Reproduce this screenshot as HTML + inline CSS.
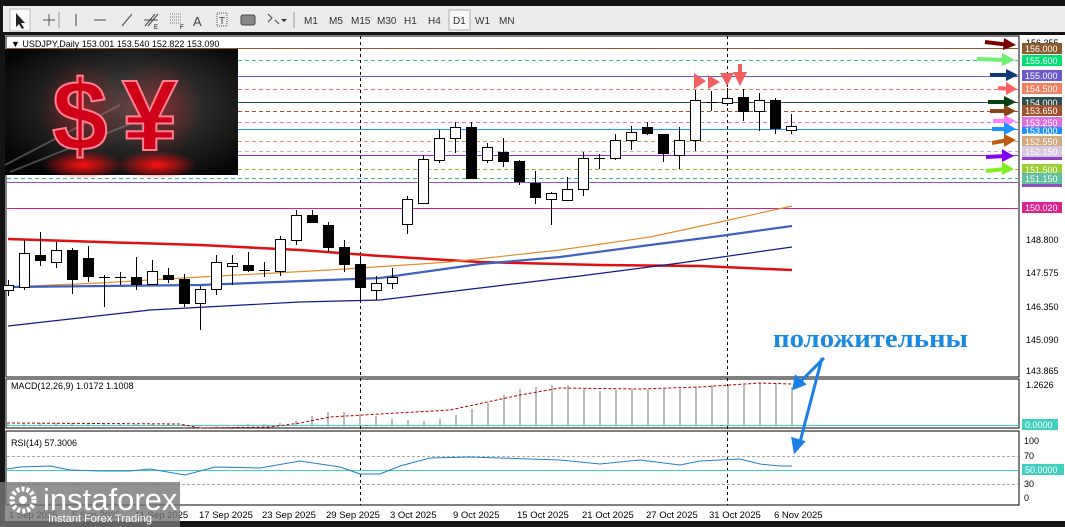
<!DOCTYPE html>
<html><head><meta charset="utf-8"><style>
body{margin:0;width:1065px;height:527px;background:#111;overflow:hidden;font-family:"Liberation Sans",sans-serif;position:relative}
svg{position:absolute;left:0;top:0}
</style></head><body>
<svg width="1065" height="527" xmlns="http://www.w3.org/2000/svg" font-family="Liberation Sans, sans-serif">
<rect x="0" y="0" width="1065" height="527" fill="#141414"/>
<rect x="3" y="6" width="1062" height="26" fill="#ececec"/>
<rect x="10" y="9" width="20" height="22" fill="#fafafa" stroke="#bbb"/>
<path d="M16 13 L16 27 L19 24 L22 29 L24 28 L21 23 L25 23 Z" fill="#222"/>
<path d="M43 20 H55 M49 14 V26" stroke="#555"/>
<path d="M59 12V28" stroke="#999"/>
<path d="M76 14V26" stroke="#444"/>
<path d="M94 20H106" stroke="#444"/>
<path d="M122 26L132 14" stroke="#444"/>
<path d="M145 26L155 14M148 26L158 14M144 20H158" stroke="#444"/>
<text x="154" y="29" font-size="6">E</text>
<path d="M170 14H182M170 17H182M170 20H182M170 23H182" stroke="#777" stroke-dasharray="1,1"/>
<text x="180" y="29" font-size="6">F</text>
<text x="193" y="26" font-size="13" fill="#444">A</text>
<rect x="217" y="13" width="10" height="13" fill="none" stroke="#555" stroke-dasharray="1,1"/><text x="219" y="24" font-size="10" fill="#444">T</text>
<rect x="241" y="15" width="14" height="10" rx="2" fill="#888" stroke="#444"/>
<path d="M268 14l4 4-4 4M275 20l4 4" stroke="#444" fill="none"/><path d="M281 19l3 3 3-3z" fill="#333"/>
<path d="M294 12V28" stroke="#999"/>
<g font-size="10" fill="#333">
<text x="304" y="24">M1</text><text x="329" y="24">M5</text><text x="351" y="24">M15</text><text x="377" y="24">M30</text><text x="404" y="24">H1</text><text x="428" y="24">H4</text>
<rect x="449" y="10" width="21" height="20" fill="#f8f8f8" stroke="#aaa"/><text x="453" y="24">D1</text><text x="475" y="24">W1</text><text x="499" y="24">MN</text></g>
<rect x="5" y="35" width="1060" height="486" fill="#fff"/>
<rect x="6" y="36" width="1013" height="341" fill="#fff" stroke="#000"/>
<rect x="6" y="379" width="1013" height="49" fill="#fff" stroke="#000"/>
<rect x="6" y="431" width="1013" height="74" fill="#fff" stroke="#000"/>
<rect x="0" y="521" width="1065" height="6" fill="#141414"/>
<g stroke-width="1">
<line x1="7" x2="1018" y1="48.5" y2="48.5" stroke="#8b5a2b"/>
<line x1="7" x2="1018" y1="60.5" y2="60.5" stroke="#3dbf7f" stroke-dasharray="4,3"/>
<line x1="7" x2="1018" y1="76.5" y2="76.5" stroke="#6a5acd"/>
<line x1="7" x2="1018" y1="89.5" y2="89.5" stroke="#e08060" stroke-dasharray="4,3"/>
<line x1="7" x2="1018" y1="102.5" y2="102.5" stroke="#2f4f4f"/>
<line x1="7" x2="1018" y1="111.5" y2="111.5" stroke="#a0522d" stroke-dasharray="4,3"/>
<line x1="7" x2="1018" y1="122.5" y2="122.5" stroke="#d080d0" stroke-dasharray="4,3"/>
<line x1="7" x2="1018" y1="129.5" y2="129.5" stroke="#1e90ff"/>
<line x1="7" x2="1018" y1="141.5" y2="141.5" stroke="#c8a070" stroke-dasharray="4,3"/>
<line x1="7" x2="1018" y1="151.5" y2="151.5" stroke="#c0b0d0" stroke-dasharray="4,3"/>
<line x1="7" x2="1018" y1="155.5" y2="155.5" stroke="#8a2be2"/>
<line x1="7" x2="1018" y1="169.5" y2="169.5" stroke="#a0b030" stroke-dasharray="4,3"/>
<line x1="7" x2="1018" y1="178.5" y2="178.5" stroke="#40b0a0" stroke-dasharray="4,3"/>
<line x1="7" x2="1018" y1="182.5" y2="182.5" stroke="#9050c0"/>
<line x1="7" x2="1018" y1="208.5" y2="208.5" stroke="#d02090"/>
</g>
<line x1="360.5" x2="360.5" y1="36" y2="505" stroke="#000" stroke-dasharray="3,3"/>
<line x1="727.5" x2="727.5" y1="36" y2="505" stroke="#000" stroke-dasharray="3,3"/>
<polyline points="8,239 100,242 200,245 300,250 380,256 480,262 600,265 700,266 792,270" fill="none" stroke="#e01010" stroke-width="2.5"/>
<polyline points="8,287 100,283 200,277 330,270 450,262 560,250 650,237 720,222 792,206" fill="none" stroke="#e0902a" stroke-width="1.2"/>
<polyline points="8,287 200,285 380,278 480,264 560,257 650,245 720,236 792,226" fill="none" stroke="#4060c0" stroke-width="2.2"/>
<polyline points="8,326 150,310 300,302 380,300 480,288 580,276 680,263 792,247" fill="none" stroke="#101a8a" stroke-width="1.2"/>
<g id="candles" stroke="#000" stroke-width="1"></g>
<defs><radialGradient id="rg" cx="55%" cy="45%" r="65%"><stop offset="0" stop-color="#4a4a4a"/><stop offset="1" stop-color="#050505"/></radialGradient>
<radialGradient id="gl" cx="50%" cy="50%" r="50%"><stop offset="0" stop-color="#ff1010"/><stop offset="1" stop-color="#ff1010" stop-opacity="0"/></radialGradient></defs>
<rect x="5" y="49" width="233" height="126" fill="url(#rg)"/>
<path d="M5 165 L120 105 M10 172 L140 120" stroke="#888" stroke-width="2" opacity=".5"/>
<ellipse cx="83" cy="165" rx="40" ry="14" fill="url(#gl)"/><ellipse cx="157" cy="165" rx="40" ry="14" fill="url(#gl)"/>
<ellipse cx="83" cy="110" rx="45" ry="50" fill="url(#gl)" opacity=".35"/><ellipse cx="157" cy="110" rx="45" ry="50" fill="url(#gl)" opacity=".35"/>
<text x="52" y="150" font-size="100" font-weight="bold" font-family="Liberation Sans,sans-serif" fill="#d00018" stroke="#ff8090" stroke-width="2">$</text>
<text x="122" y="150" font-size="100" font-weight="bold" font-family="Liberation Sans,sans-serif" fill="#d00018" stroke="#ff8090" stroke-width="2">¥</text>
<text x="11" y="47" font-size="9" fill="#000">▼ USDJPY,Daily  153.001 153.540 152.822 153.090</text>
<g fill="#f06060"><path d="M694 73l12 8-12 8z"/><path d="M708 75l12 7-12 7z"/><path d="M720 73h14l-7 13z"/><path d="M733 72h14l-7 14z"/><rect x="738" y="64" width="4" height="9"/></g>
<g font-size="9">
<text x="1026" y="46" fill="#000">156.355</text>
<rect x="1022" y="43" width="40" height="11" fill="#8b5a2b"/><text x="1025" y="52" fill="#fff">156.000</text>
<rect x="1022" y="55" width="40" height="11" fill="#00e070"/><text x="1025" y="64" fill="#fff">155.600</text>
<rect x="1022" y="70" width="40" height="11" fill="#6a5acd"/><text x="1025" y="79" fill="#fff">155.000</text>
<rect x="1022" y="83" width="40" height="11" fill="#f08060"/><text x="1025" y="92" fill="#fff">154.500</text>
<rect x="1022" y="97" width="40" height="11" fill="#2f4f4f"/><text x="1025" y="106" fill="#fff">154.000</text>
<rect x="1022" y="105" width="40" height="11" fill="#a0522d"/><text x="1025" y="114" fill="#fff">153.650</text>
<rect x="1022" y="117" width="40" height="11" fill="#e070e0"/><text x="1025" y="126" fill="#fff">153.250</text>
<rect x="1022" y="127" width="40" height="7" fill="#1e90ff"/><text x="1025" y="134" fill="#fff">153.000</text>
<rect x="1022" y="136" width="40" height="11" fill="#d0a880"/><text x="1025" y="145" fill="#fff">152.550</text>
<rect x="1022" y="150" width="40" height="10" fill="#9040c0"/>
<rect x="1022" y="146" width="40" height="11" fill="#d8c8e0"/><text x="1025" y="155" fill="#fff">152.150</text>
<rect x="1022" y="164" width="40" height="11" fill="#9acd32"/><text x="1025" y="173" fill="#fff">151.500</text>
<rect x="1022" y="177" width="40" height="10" fill="#9050c0"/>
<rect x="1022" y="173" width="40" height="11" fill="#60c0a0"/><text x="1025" y="182" fill="#fff">151.150</text>
<rect x="1022" y="202" width="40" height="11" fill="#e0208c"/><text x="1025" y="211" fill="#fff">150.020</text>
<text x="1026" y="243" fill="#000">148.800</text>
<text x="1026" y="276" fill="#000">147.575</text>
<text x="1026" y="310" fill="#000">146.350</text>
<text x="1026" y="343" fill="#000">145.090</text>
<text x="1026" y="374" fill="#000">143.865</text>
<text x="1026" y="388" fill="#000">1.2626</text>
<rect x="1022" y="419" width="36" height="11" fill="#40d0c0"/><text x="1025" y="428" fill="#fff">0.0000</text>
<text x="1024" y="444" fill="#000">100</text><text x="1024" y="459" fill="#000">70</text>
<rect x="1022" y="464" width="42" height="11" fill="#40d0c0"/><text x="1025" y="473" fill="#fff">50.0000</text>
<text x="1024" y="487" fill="#000">30</text><text x="1024" y="501" fill="#000">0</text>
</g>
<g stroke-width="4" fill="none">
<path d="M985 42l25 3" stroke="#7a0000"/><path d="M1004 38l12 7-13 5z" fill="#7a0000"/>
<path d="M977 59l30 1" stroke="#70f070"/><path d="M1002 53l13 7-13 6z" fill="#70f070"/>
<path d="M990 75l20 0" stroke="#0a3a7a"/><path d="M1006 69l12 6-12 6z" fill="#0a3a7a"/>
<path d="M998 88l12 1" stroke="#ff6060"/><path d="M1006 82l11 7-11 6z" fill="#ff6060"/>
<path d="M988 102l20 0" stroke="#054010"/><path d="M1004 96l12 6-12 6z" fill="#054010"/>
<path d="M990 111l18 0" stroke="#8b4513"/><path d="M1004 105l12 6-12 6z" fill="#8b4513"/>
<path d="M993 121l15 0" stroke="#ff80ff"/><path d="M1004 115l12 6-12 6z" fill="#ff80ff"/>
<path d="M992 129l16 0" stroke="#1e90ff"/><path d="M1004 122l12 7-12 6z" fill="#1e90ff"/>
<path d="M992 143l16 -3" stroke="#c05a10"/><path d="M1004 134l12 6-12 7z" fill="#c05a10"/>
<path d="M986 157l20 -1" stroke="#8000f0"/><path d="M1002 149l12 7-12 6z" fill="#8000f0"/>
<path d="M986 171l20 -2" stroke="#80f020"/><path d="M1002 162l12 7-12 6z" fill="#80f020"/>
</g>
<text x="11" y="389" font-size="9">MACD(12,26,9) 1.0172 1.1008</text>
<line x1="7" x2="1018" y1="425.5" y2="425.5" stroke="#40d0c0"/>
<g id="macd" stroke="#bbb" stroke-width="2"></g>
<polyline points="7,423 180,424 200,428 270,427 300,423 330,417 380,414 450,410 520,395 560,388 640,389 700,387 760,383 792,384" fill="none" stroke="#b00000" stroke-dasharray="3,2"/>
<text x="11" y="446" font-size="9">RSI(14) 57.3006</text>
<line x1="7" x2="1018" y1="456.5" y2="456.5" stroke="#aaa" stroke-dasharray="3,2"/>
<line x1="7" x2="1018" y1="484.5" y2="484.5" stroke="#aaa" stroke-dasharray="3,2"/>
<line x1="7" x2="1018" y1="470.5" y2="470.5" stroke="#40d0c0"/>
<polyline points="7,469 20,467 50,466 70,470 100,471 130,471 150,469 185,475 215,467 260,468 300,461 340,467 360,474 380,474 400,466 430,458 470,457 500,458 560,460 600,464 640,460 680,465 700,461 740,459 760,464 780,466 792,466" fill="none" stroke="#2080c0"/>
<g font-size="9.5" fill="#000">
<text x="9" y="518">1 Sep 2025</text><text x="72" y="518">5 Sep 2025</text><text x="135" y="518">11 Sep 2025</text>
<text x="199" y="518">17 Sep 2025</text><text x="262" y="518">23 Sep 2025</text><text x="326" y="518">29 Sep 2025</text>
<text x="390" y="518">3 Oct 2025</text><text x="453" y="518">9 Oct 2025</text><text x="517" y="518">15 Oct 2025</text>
<text x="582" y="518">21 Oct 2025</text><text x="646" y="518">27 Oct 2025</text><text x="709" y="518">31 Oct 2025</text><text x="774" y="518">6 Nov 2025</text>
</g>
<rect x="0" y="482" width="180" height="45" fill="#777" opacity=".8"/>
<circle cx="23" cy="500" r="11" fill="none" stroke="#fff" stroke-width="5" stroke-dasharray="3,2"/><circle cx="23" cy="500" r="4" fill="#fff"/>
<text x="43" y="510" font-size="31" fill="#fff">instaforex</text>
<text x="48" y="522" font-size="11" fill="#fff">Instant Forex Trading</text>
<text x="773" y="347" font-size="26" font-weight="bold" font-family="Liberation Serif,serif" fill="#1a8ae0" textLength="195" lengthAdjust="spacingAndGlyphs">положительны</text>
<g stroke="#1a80e8" stroke-width="3" fill="#1a80e8">
<path d="M824 358 L800 382" fill="none"/><path d="M794 388l2-11 8 7z"/>
<path d="M822 358 L800 442" fill="none"/><path d="M795 451l-2-12 10 3z"/>
</g>
</svg>
<script>
var C=[[8,285,290,1,280,296],[24,253,287,1,240,290],[40,255,260,0,232,266],[56,250,262,1,242,268],[72,250,279,0,248,294],[88,258,276,0,246,282],[104,277,278,2,275,307],[120,277,278,2,272,285],[136,277,284,0,257,290],[152,271,284,1,260,284],[168,275,279,0,268,283],[184,279,303,0,274,307],[200,289,303,1,286,330],[216,262,289,1,255,295],[232,263,266,1,255,285],[248,265,270,0,252,272],[264,270,271,2,262,277],[280,239,271,1,236,276],[296,215,240,1,210,245],[312,215,222,0,210,222],[328,225,247,0,222,252],[344,247,264,0,240,272],[360,264,287,0,256,302],[376,283,290,1,276,300],[392,277,283,1,268,289],[407,199,224,1,196,234],[423,159,203,1,155,204],[439,138,160,1,130,163],[455,127,138,1,122,153],[471,127,178,0,122,178],[487,147,160,1,143,163],[503,152,161,0,138,167],[519,161,181,0,160,185],[535,183,197,0,171,204],[551,193,199,1,192,225],[567,189,200,1,177,201],[583,158,189,1,152,196],[599,158,159,2,154,169],[615,140,158,1,134,160],[631,132,140,1,126,150],[647,127,133,0,122,135],[663,134,153,0,134,162],[679,140,155,1,127,169],[695,100,140,1,90,151],[711,102,103,2,91,111],[727,98,103,1,88,106],[743,97,111,0,89,121],[759,100,111,1,93,131],[775,100,128,0,98,134],[791,126,130,1,114,134]];
var g=document.getElementById('candles'),s='';
C.forEach(function(c){var x=c[0];s+='<line x1="'+(x+.5)+'" x2="'+(x+.5)+'" y1="'+c[4]+'" y2="'+c[5]+'"/>';
if(c[3]==2)s+='<line x1="'+(x-5)+'" x2="'+(x+6)+'" y1="'+c[1]+'.5" y2="'+c[1]+'.5"/>';
else s+='<rect x="'+(x-4.5)+'" y="'+(c[1]+.5)+'" width="10" height="'+Math.max(2,c[2]-c[1])+'" fill="'+(c[3]?'#fff':'#000')+'"/>';});
g.innerHTML=s;
var m=document.getElementById('macd'),t='',h=[1,2,2,2,2,1,1,1,1,1,1,-3,-4,-2,-1,1,1,2,4,9,13,13,11,9,6,5,4,6,10,16,22,30,36,38,40,40,36,34,35,36,36,36,36,38,40,39,40,42,42,38];
h.forEach(function(v,i){var x=8+i*16;if(v>0)t+='<line x1="'+x+'" x2="'+x+'" y1="'+(425-v)+'" y2="425"/>';else t+='<line x1="'+x+'" x2="'+x+'" y1="425" y2="'+(425-v)+'"/>';});
m.innerHTML=t;
</script>
</body></html>
